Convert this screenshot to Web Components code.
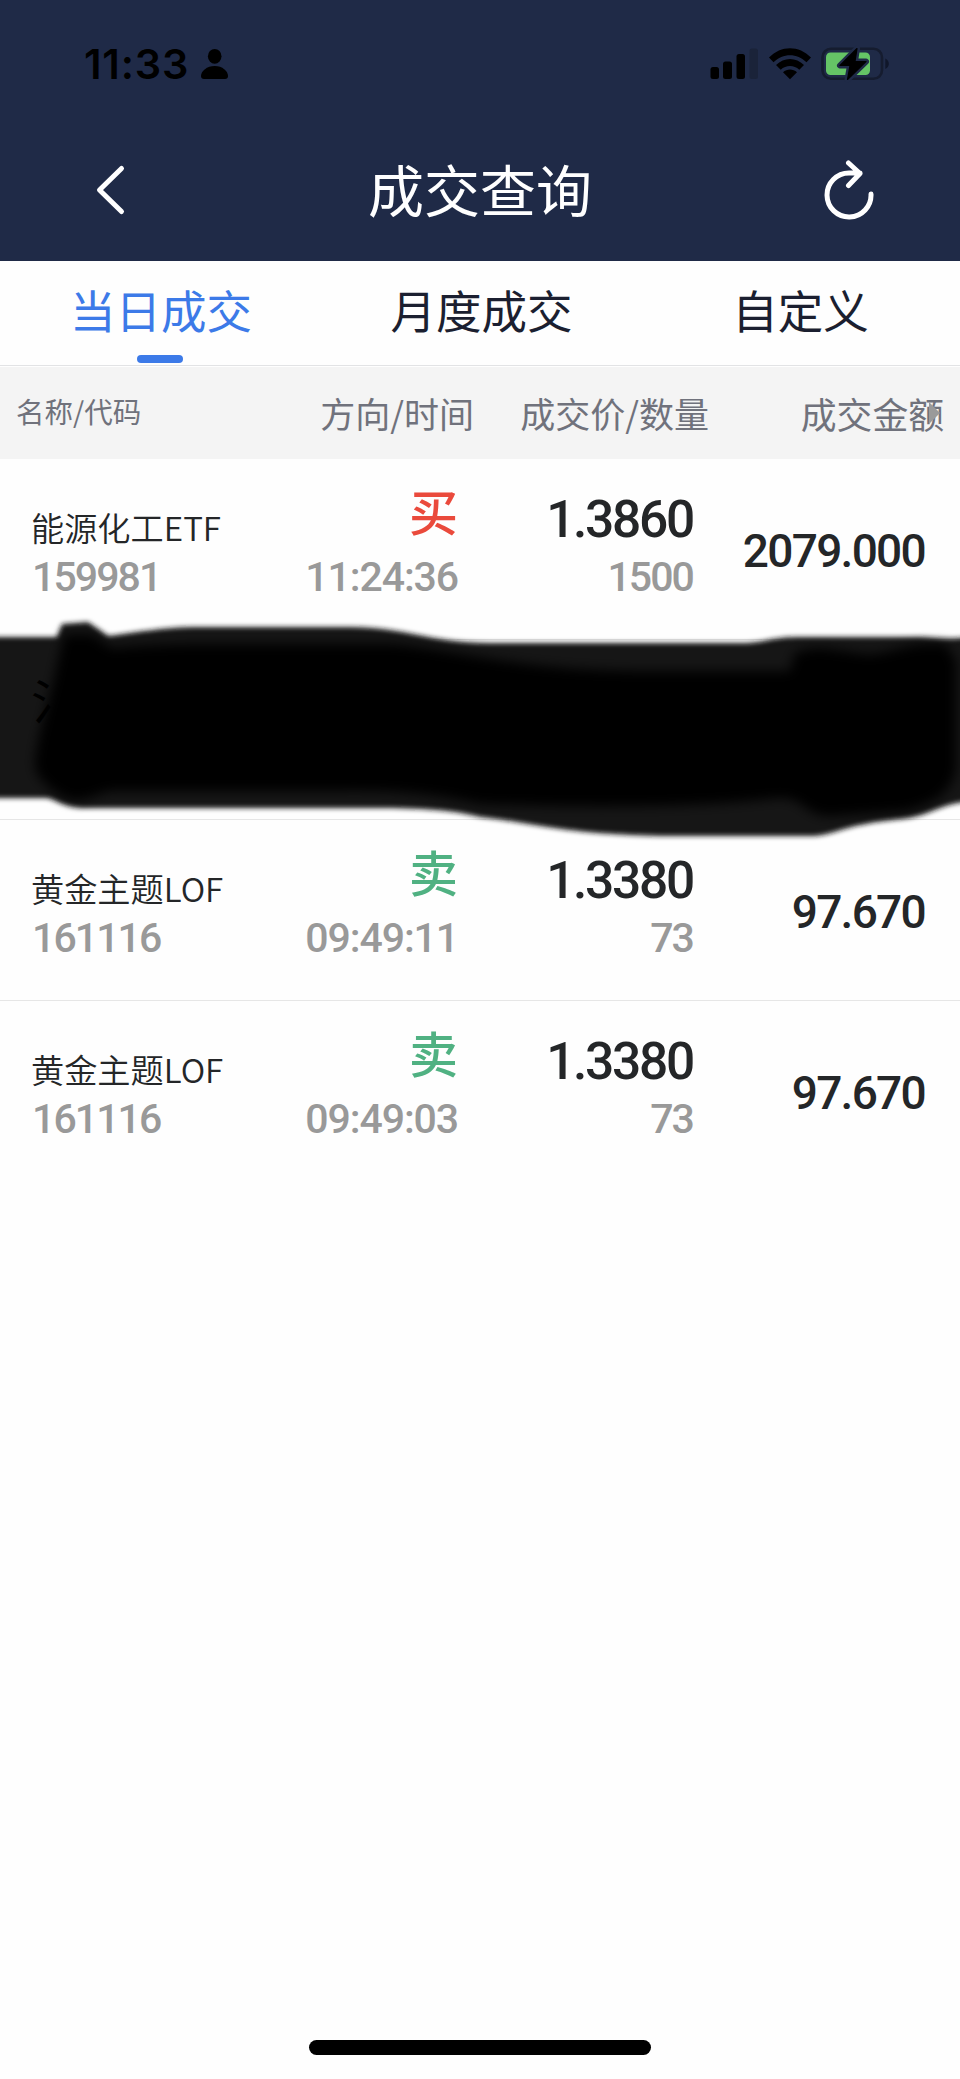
<!DOCTYPE html>
<html lang="zh-CN">
<head>
<meta charset="UTF-8">
<meta name="viewport" content="width=device-width, initial-scale=1">
<title>成交查询</title>
<style>
    html, body {
        margin: 0;
        padding: 0;
        background: #fefefe;
    }

    body {
        font-family: "Noto Sans CJK SC", sans-serif;
        --navy: #1f2a47;
        --blue: #3c7ae8;
        --text: #242628;
        --muted: #999;
    }
</style>
</head>
<body>
<trade-app></trade-app>

<script>
class StatusBar extends HTMLElement {
    constructor() {
        super();
        this.attachShadow({ mode: 'open' });
    }

    connectedCallback() {
        this.shadowRoot.innerHTML = `
            <style>
                :host {
                    display: flex;
                    align-items: center;
                    height: 128px;
                    padding: 0 70px 0 84px;
                    box-sizing: border-box;
                    color: #000;
                }

                .time {
                    font: 600 41.5px/50px Inter, sans-serif;
                    letter-spacing: 0.8px;
                    width: 108px;
                    white-space: nowrap;
                }

                .person {
                    margin-left: 8px;
                }

                .right {
                    margin-left: auto;
                }

                svg {
                    display: block;
                }
            </style>
            <div class="time">11:33</div>
            <svg class="person" width="30" height="34" viewBox="0 0 30 34">
                <ellipse cx="14.7" cy="9.3" rx="6.8" ry="7.4"/>
                <path d="M4 32C2 32 1 31 1 29C1 24 7 19 14.7 19S28 24 28 29C28 31 27 32 25 32Z"/>
            </svg>
            <svg class="right" width="190" height="44" viewBox="700 42 190 44">
                <rect x="710.5" y="67" width="8.5" height="12" rx="2.5"/>
                <rect x="723" y="61.5" width="9" height="17.5" rx="2.5"/>
                <rect x="736.5" y="54" width="8.5" height="25" rx="2.5"/>
                <rect x="749.5" y="48.5" width="8.5" height="30.5" rx="2.5" fill="#1a2339"/>
                <path d="M769 57.5C781 45 799 45 811 57.5L806.5 62.3C797 52.8 783 52.8 773.5 62.3Z"/>
                <path d="M776 65C784 57 796 57 804 65L799.3 69.8C794 64.8 786 64.8 780.7 69.8Z"/>
                <path d="M783 72.2C787 68.5 793 68.5 797 72.2L790 79.3Z"/>
                <rect x="822.5" y="48.8" width="59.5" height="30" rx="8.5" fill="none" stroke="#151c2f" stroke-width="2.6"/>
                <path d="M885.3 58.5C890 61 890 66.5 885.3 69Z" fill="#10172a"/>
                <rect x="826" y="52.5" width="44" height="22.5" rx="4.5" fill="#65c466"/>
                <path d="M857 48.5L840 65.5H850L847.5 79.5L866 61.500H855Z" stroke="#1f2a47" stroke-width="6" stroke-linejoin="round"/>
                <path d="M857 48.5L840 65.5H850L847.5 79.5L866 61.500H855Z" stroke="#000" stroke-width="1.2" stroke-linejoin="round"/>
            </svg>
        `;
    }
}

class NavBar extends HTMLElement {
    constructor() {
        super();
        this.attachShadow({ mode: 'open' });
    }

    connectedCallback() {
        this.shadowRoot.innerHTML = `
            <style>
                :host {
                    display: flex;
                    justify-content: space-between;
                    align-items: center;
                    height: 133px;
                    padding: 0 80px 9px;
                    box-sizing: border-box;
                    color: #fff;
                }

                h1 {
                    margin: 0 0 5px;
                    font-size: 56px;
                    font-weight: 400;
                    line-height: 80px;
                }

                svg {
                    display: block;
                    fill: none;
                    stroke: #fff;
                    stroke-width: 5;
                    stroke-linecap: round;
                    stroke-linejoin: round;
                }
            </style>
            <svg width="60" height="60" viewBox="80 160 60 60">
                <path d="M121.500 168.500L99.500 190L121.500 211.500"/>
            </svg>
            <h1><slot></slot></h1>
            <svg width="60" height="60" viewBox="820 160 60 60">
                <path d="M871 194A22 22 0 1 1 849 173H860M848.5 163L860 173.5L848.5 185.5"/>
            </svg>
        `;
    }
}

class TabBar extends HTMLElement {
    constructor() {
        super();
        this.attachShadow({ mode: 'open' });
    }

    connectedCallback() {
        this.shadowRoot.innerHTML = `
            <style>
                :host {
                    display: grid;
                    grid-template-columns: 322px 319px 319px;
                    height: 105px;
                    box-sizing: border-box;
                    border-bottom: 1px solid #e2e3e5;
                    background: #fefefe;
                }
            </style>
            <slot></slot>
        `;
    }
}

class TabItem extends HTMLElement {
    constructor() {
        super();
        this.attachShadow({ mode: 'open' });
    }

    connectedCallback() {
        this.shadowRoot.innerHTML = `
            <style>
                :host {
                    display: flex;
                    flex-direction: column;
                    align-items: center;
                    justify-content: space-between;
                    padding: 15px 0 2px;
                    font-size: 45.5px;
                    line-height: 66px;
                    color: #1b1f30;
                }

                :host([active]) {
                    color: var(--blue);
                }

                .bar {
                    width: 46px;
                    height: 8px;
                    margin-right: 2px;
                    border-radius: 4px;
                }

                :host([active]) .bar {
                    background: var(--blue);
                }
            </style>
            <span><slot></slot></span>
            <div class="bar"></div>
        `;
    }
}

class ListHeader extends HTMLElement {
    constructor() {
        super();
        this.attachShadow({ mode: 'open' });
    }

    connectedCallback() {
        this.shadowRoot.innerHTML = `
            <style>
                :host {
                    display: grid;
                    grid-template-columns: 239px 235px 235px 235px;
                    height: 92px;
                    margin-top: 1px;
                    padding: 0 16px 0 0;
                    box-sizing: border-box;
                    background: #f4f4f4;
                    color: #70727c;
                    font-size: 35px;
                    line-height: 92px;
                    text-align: right;
                    white-space: nowrap;
                }

                .first {
                    padding-left: 16px;
                    font-size: 28.5px;
                    line-height: 88px;
                    text-align: left;
                }

                .last {
                    position: relative;
                    font-size: 35.8px;
                }

                .arrow {
                    position: absolute;
                    right: 4px;
                    top: 35px;
                    border: solid transparent;
                    border-width: 11px 0 11px 11px;
                    border-left-color: #9a9a9a;
                }
            </style>
            <span class="first">名称/代码</span>
            <span>方向/时间</span>
            <span>成交价/数量</span>
            <span class="last">成交金额<i class="arrow"></i></span>
        `;
    }
}

class TradeRow extends HTMLElement {
    constructor() {
        super();
        this.attachShadow({ mode: 'open' });
    }

    connectedCallback() {
        const get = (name) => this.getAttribute(name) || '';
        const side = get('side');

        this.shadowRoot.innerHTML = `
            <style>
                :host {
                    display: grid;
                    grid-template-columns: 227px 200px 235px 232px;
                    height: 180.6px;
                    padding: 0 35px 0 31px;
                    box-sizing: border-box;
                    border-bottom: 1px solid #e6e6e6;
                    color: var(--text);
                    white-space: nowrap;
                }

                :host(:last-of-type) {
                    border-bottom: none;
                }

                .cell {
                    display: flex;
                    flex-direction: column;
                    text-align: right;
                }

                .cell.left {
                    text-align: left;
                }

                .name {
                    padding-top: 47px;
                    font-size: 33.2px;
                    line-height: 42px;
                    font-weight: 350;
                }

                .side {
                    padding-top: 21px;
                    font-size: 49px;
                    line-height: 60px;
                    font-weight: 500;
                }

                .buy {
                    color: #ea4a3c;
                }

                .sell {
                    color: #50b182;
                }

                .num {
                    font-family: Roboto, sans-serif;
                    font-weight: 500;
                }

                .price {
                    padding-top: 31px;
                    font-size: 51.5px;
                    line-height: 60px;
                    letter-spacing: -2.3px;
                }

                .sub {
                    margin-top: 3px;
                    font-size: 41px;
                    line-height: 48px;
                    letter-spacing: -1.9px;
                    color: var(--muted);
                }

                .side + .sub {
                    margin-top: 13px;
                    letter-spacing: -1.1px;
                }

                .name + .sub {
                    margin-top: 5px;
                    padding-left: 1px;
                }

                .amount {
                    padding-top: 64px;
                    font-size: 46px;
                    line-height: 56px;
                    letter-spacing: -1.7px;
                }
            </style>
            <div class="cell left">
                <div class="name">${get('name')}</div>
                <div class="sub num">${get('code')}</div>
            </div>
            <div class="cell">
                <div class="side ${side}">${side === 'buy' ? '买' : side === 'sell' ? '卖' : ''}</div>
                <div class="sub num">${get('time')}</div>
            </div>
            <div class="cell">
                <div class="price num">${get('price')}</div>
                <div class="sub num">${get('volume')}</div>
            </div>
            <div class="cell">
                <div class="amount num">${get('amount')}</div>
            </div>
        `;
    }
}

// Row covered by a marker stroke, which spills over the neighbouring rows
class MaskedRow extends HTMLElement {
    constructor() {
        super();
        this.attachShadow({ mode: 'open' });
    }

    connectedCallback() {
        this.shadowRoot.innerHTML = `
            <style>
                :host {
                    display: block;
                    position: relative;
                    z-index: 1;
                    height: 180.6px;
                    box-sizing: border-box;
                    border-bottom: 1px solid #e6e6e6;
                }

                svg {
                    position: absolute;
                    left: 0;
                    top: -39.6px;
                    display: block;
                }

                .rest {
                    position: absolute;
                    left: 31px;
                    top: 22px;
                    font-size: 48px;
                    line-height: 72px;
                    color: #000;
                }
            </style>
            <svg width="960" height="260" viewBox="0 600 960 260">
                <defs>
                    <filter id="edge" x="-5%" y="-10%" width="110%" height="120%">
                        <feGaussianBlur stdDeviation="2.8"/>
                    </filter>
                    <filter id="core" x="-5%" y="-10%" width="110%" height="120%">
                        <feGaussianBlur stdDeviation="6"/>
                    </filter>
                </defs>
                <path filter="url(#edge)" fill="#161616" d="M-20 637H57L62 624L88 622L108 636C135 633 160 627 200 627H350C405 627 430 643 490 643H740C765 643 770 637 800 637H915C935 637 940 641 980 636V801C940 801 935 815 900 819C840 825 835 836 810 836H660C560 834 530 822 480 817C440 807 400 808 340 808H85C65 808 55 799 47 798H-20Z"/>
                <path filter="url(#core)" fill="#000" d="M64 634L92 634L112 648C140 645 170 644 210 644H390C450 648 520 671 640 671H790L794 654C820 640 850 656 875 654C900 650 910 642 945 644L956 660V770C950 797 930 804 905 811L830 816C805 816 805 798 780 798C700 807 600 808 480 804C430 792 380 790 340 791H110C95 795 85 802 72 800C55 795 38 780 35 768C34 745 50 700 58 660Z"/>
            </svg>
            <span class="rest">氵</span>
        `;
    }
}

class TradeApp extends HTMLElement {
    constructor() {
        super();
        this.attachShadow({ mode: 'open' });
    }

    connectedCallback() {
        this.shadowRoot.innerHTML = `
            <style>
                :host {
                    display: flex;
                    flex-direction: column;
                    width: 960px;
                    height: 2079px;
                    overflow: hidden;
                }

                header {
                    background: var(--navy);
                }

                footer {
                    margin-top: auto;
                    padding-bottom: 24px;
                }

                .home {
                    width: 342px;
                    height: 15px;
                    margin: 0 auto;
                    border-radius: 8px;
                    background: #000;
                }
            </style>
            <header>
                <status-bar></status-bar>
                <nav-bar>成交查询</nav-bar>
            </header>
            <tab-bar>
                <tab-item active>当日成交</tab-item>
                <tab-item>月度成交</tab-item>
                <tab-item>自定义</tab-item>
            </tab-bar>
            <list-header></list-header>
            <main>
                <trade-row name="能源化工ETF" code="159981" side="buy" time="11:24:36" price="1.3860" volume="1500" amount="2079.000"></trade-row>
                <masked-row></masked-row>
                <trade-row name="黄金主题LOF" code="161116" side="sell" time="09:49:11" price="1.3380" volume="73" amount="97.670"></trade-row>
                <trade-row name="黄金主题LOF" code="161116" side="sell" time="09:49:03" price="1.3380" volume="73" amount="97.670"></trade-row>
            </main>
            <footer><div class="home"></div></footer>
        `;
    }
}

customElements.define('status-bar', StatusBar);
customElements.define('nav-bar', NavBar);
customElements.define('tab-bar', TabBar);
customElements.define('tab-item', TabItem);
customElements.define('list-header', ListHeader);
customElements.define('trade-row', TradeRow);
customElements.define('masked-row', MaskedRow);
customElements.define('trade-app', TradeApp);
</script>
</body>
</html>
